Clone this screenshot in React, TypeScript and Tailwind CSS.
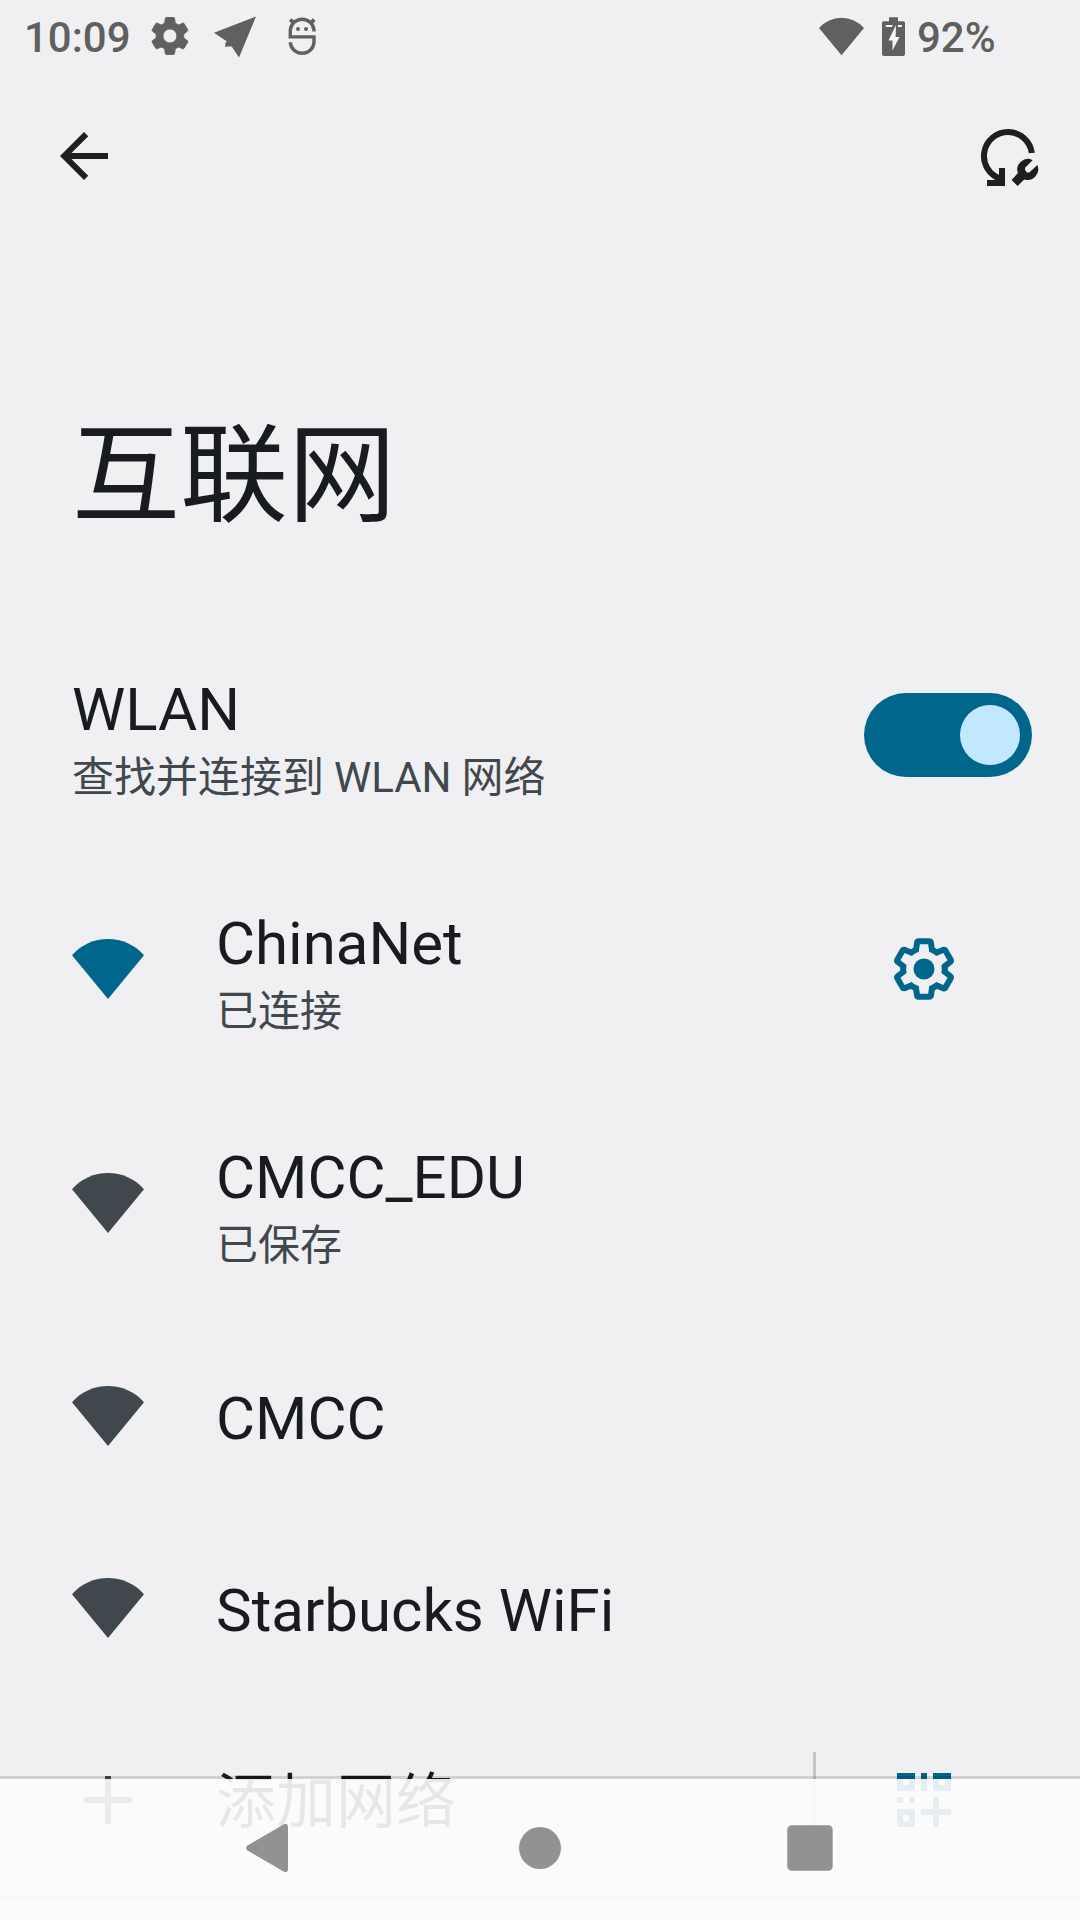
import React from "react";

const WIFI = "M0 7.4A16 16 0 0 1 24 7.4L12 22Z";

function WifiIcon({ className }: { className: string }) {
  return (
    <svg viewBox="0 0 24 24" className={className} fill="currentColor">
      <path d={WIFI} />
    </svg>
  );
}

function StatusBar() {
  return (
    <div className="flex h-[72px] shrink-0 items-center pl-6 text-[42px] font-medium leading-[50px] text-[#606060]">
      <span className="mt-[3px] w-[124px]">10:09</span>
      <svg viewBox="0.1 0.1 24.4 24.4" className="h-[45px] w-[45px]" fill="currentColor" stroke="currentColor" strokeWidth="0.5">
        <path d="M19.43 12.98c.04-.32.07-.64.07-.98s-.03-.66-.07-.98l2.11-1.65c.19-.15.24-.42.12-.64l-2-3.46c-.12-.22-.39-.3-.61-.22l-2.49 1c-.52-.4-1.08-.73-1.69-.98l-.38-2.65C14.46 2.18 14.25 2 14 2h-4c-.25 0-.46.18-.49.42l-.38 2.65c-.61.25-1.17.59-1.69.98l-2.49-1c-.23-.09-.49 0-.61.22l-2 3.46c-.13.22-.07.49.12.64l2.11 1.65c-.04.32-.07.65-.07.98s.03.66.07.98l-2.11 1.65c-.19.15-.24.42-.12.64l2 3.46c.12.22.39.3.61.22l2.49-1c.52.4 1.08.73 1.69.98l.38 2.65c.03.24.24.42.49.42h4c.25 0 .46-.18.49-.42l.38-2.65c.61-.25 1.17-.59 1.69-.98l2.49 1c.23.09.49 0 .61-.22l2-3.46c.12-.22.07-.49-.12-.64l-2.11-1.65zM12 15.8a3.8 3.8 0 1 1 0-7.6a3.8 3.8 0 0 1 0 7.6z" />
      </svg>
      <svg viewBox="0 0 45 45" className="ml-[19px] h-[45px] w-[45px]" fill="currentColor">
        <path d="M44 2.500L27 43.500L19.700 32.500H15.300L13.300 33.200V29.200L14.700 27.200L12 25.500L2 18.800Z" />
      </svg>
      <svg viewBox="0 -0.5 45 45" className="ml-[22px] h-[45px] w-[45px]" fill="none" stroke="currentColor" strokeWidth="3.4">
        <path d="M35 17V15.500A11.900 11.900 0 0 0 11.300 15.500V22.400H35V28A11.900 11.900 0 0 1 11.300 28V27.800" />
        <path d="M11.300 5L14 8M35.200 5L32.500 8" strokeWidth="3.8" />
        <circle cx="19" cy="14.500" r="2" fill="currentColor" stroke="none" />
        <circle cx="27" cy="14.500" r="2" fill="currentColor" stroke="none" />
      </svg>
      <WifiIcon className="ml-[495px] h-[45px] w-[45px]" />
      <svg viewBox="0 0 24 39" className="ml-[17px] h-[39px] w-[24px]" fill="currentColor">
        <path d="M8 0.3H17V4.3H22.5Q24 4.3 24 6V37Q24 39 22 39H3Q1 39 1 37V6Q1 4.3 2.500 4.300H8Z" />
        <path d="M4.800 8H11.800L11 10H4.800ZM17.300 8H20.800V10H16.500ZM15 8L7.500 23.500H11.500V33.500L18.500 20H14.600Z" fill="#f8f8f9" />
      </svg>
      <span className="ml-[12px] mt-[3px]">92%</span>
    </div>
  );
}

function TopBar() {
  return (
    <div className="flex h-[168px] shrink-0 items-center justify-between pl-12 pr-9 text-[#1f1f1f]">
      <svg viewBox="0 0 24 24" className="h-[72px] w-[72px]" fill="currentColor">
        <path d="M20 11H7.83l5.59-5.590L12 4l-8 8 8 8 1.410-1.410L7.830 13H20v-2z" />
      </svg>
      <svg viewBox="0 0 24 24" className="h-[72px] w-[72px]" fill="none" stroke="currentColor" strokeWidth="2">
        <path d="M19.93 11A8 8 0 1 0 9.500 19.600" />
        <path d="M10 16V21H5" />
        <path fill="currentColor" stroke="none" d="M20.200 13.400L17.700 15.900V16.700L18.300 17.500H19.100L21.800 15A3.600 3.600 0 0 1 17.400 19.800L15.200 22L13.200 20L15.300 17.700A3.500 3.500 0 0 1 20.200 13.400Z" />
      </svg>
    </div>
  );
}

type Network = { name: string; state?: string; connected?: boolean };

const networks: Network[] = [
  { name: "ChinaNet", state: "已连接", connected: true },
  { name: "CMCC_EDU", state: "已保存" },
  { name: "CMCC" },
  { name: "Starbucks WiFi" },
];

function RowText({ title, summary }: { title: string; summary?: string }) {
  return (
    <div className="grow">
      <div className="text-[60px] leading-[70px] text-[#191c1e]">{title}</div>
      {summary && <div className="mt-[8px] text-[42px] leading-[50px] text-[#41484d] [word-spacing:-0.5px]">{summary}</div>}
    </div>
  );
}

function NetworkRow({ net }: { net: Network }) {
  return (
    <div className={net.state ? "flex h-[234px] shrink-0 items-center px-[72px]" : "flex h-[192px] shrink-0 items-center px-[72px]"}>
      <WifiIcon className={net.connected ? "mr-[72px] h-[72px] w-[72px] shrink-0 text-[#00668b]" : "mr-[72px] h-[72px] w-[72px] shrink-0 text-[#41484d]"} />
      <div className={net.state ? "grow pt-[8px]" : "grow pt-[6px]"}>
        <RowText title={net.name} summary={net.state} />
      </div>
      {net.connected && (
        <svg viewBox="0 0 24 24" className="mr-[48px] h-[72px] w-[72px] text-[#00668b]" fill="currentColor">
          <path d="M13.85,22.25h-3.7c-0.74,0 -1.36,-0.54 -1.45,-1.27l-0.27,-1.89c-0.27,-0.14 -0.53,-0.29 -0.79,-0.46l-1.8,0.72c-0.7,0.26 -1.47,-0.03 -1.81,-0.65L2.2,15.53c-0.35,-0.66 -0.2,-1.44 0.36,-1.88l1.53,-1.19c-0.01,-0.15 -0.02,-0.3 -0.02,-0.46c0,-0.15 0.01,-0.31 0.02,-0.46l-1.52,-1.19C1.98,9.9 1.83,9.09 2.2,8.47l1.85,-3.19c0.34,-0.62 1.11,-0.9 1.79,-0.63l1.81,0.73c0.26,-0.17 0.52,-0.32 0.78,-0.46l0.27,-1.91c0.09,-0.7 0.71,-1.25 1.44,-1.25h3.7c0.74,0 1.36,0.54 1.45,1.27l0.27,1.89c0.27,0.14 0.53,0.29 0.79,0.46l1.8,-0.72c0.71,-0.26 1.48,0.03 1.82,0.65l1.84,3.18c0.36,0.66 0.2,1.44 -0.36,1.88l-1.52,1.19c0.01,0.15 0.02,0.3 0.02,0.46s-0.01,0.31 -0.02,0.46l1.52,1.19c0.56,0.45 0.72,1.23 0.37,1.86l-1.86,3.22c-0.34,0.62 -1.11,0.9 -1.8,0.63l-1.8,-0.72c-0.26,0.17 -0.52,0.32 -0.78,0.46l-0.27,1.91C15.21,21.71 14.59,22.25 13.85,22.25zM10.62,20.25h2.76l0.37,-2.55l0.53,-0.22c0.44,-0.18 0.88,-0.44 1.34,-0.78l0.45,-0.34l2.38,0.96l1.38,-2.4l-2.03,-1.58l0.07,-0.56c0.03,-0.26 0.06,-0.51 0.06,-0.78c0,-0.27 -0.03,-0.53 -0.06,-0.78l-0.07,-0.56l2.03,-1.58l-1.39,-2.4l-2.39,0.96l-0.45,-0.35c-0.42,-0.32 -0.87,-0.58 -1.33,-0.77L13.75,6.3l-0.37,-2.55h-2.76L10.25,6.3L9.72,6.51C9.28,6.7 8.84,6.95 8.38,7.3L7.93,7.63L5.55,6.68L4.16,9.07l2.03,1.58l-0.07,0.56C6.09,11.47 6.06,11.74 6.06,12c0,0.26 0.02,0.53 0.06,0.78l0.07,0.56l-2.03,1.58l1.38,2.4l2.39,-0.96l0.45,0.35c0.43,0.33 0.86,0.58 1.33,0.77l0.53,0.22L10.62,20.25z" />
          <circle cx="12" cy="12" r="3.5" />
        </svg>
      )}
    </div>
  );
}

function AddRow() {
  return (
    <div className="flex h-[192px] shrink-0 items-center pl-[72px]">
      <svg viewBox="0 0 24 24" className="h-[72px] w-[72px] text-[#41484d]" fill="currentColor">
        <path d="M11 4h2v7h7v2h-7v7h-2v-7H4v-2h7z" />
      </svg>
      <div className="ml-[72px] w-[597px] pt-[6px] text-[60px] leading-[70px] text-[#191c1e]">添加网络</div>
      <div className="h-[96px] w-[3px] bg-[#c5c5c7]" />
      <svg viewBox="0 0 24 24" className="ml-[72px] h-[72px] w-[72px] text-[#00668b]" fill="currentColor" fillRule="evenodd" shapeRendering="crispEdges">
        <path d="M3 3h6v6H3zM5 5v2h2V5zM11 3h2v6h-2zM15 3h6v6h-6zM17 5v2h2V5zM3 11h2v2H3zM7 11h2v2H7zM3 15h6v6H3zM5 17v2h2v-2zM15 11h2v4h4v2h-4v4h-2v-4h-4v-2h4z" />
      </svg>
    </div>
  );
}

function NavBar() {
  return (
    <div className="absolute inset-x-0 bottom-0 flex h-[144px] flex-col text-[#929292]">
      <div className="h-[3px] bg-black/12" />
      <div className="flex grow items-center justify-center gap-[198px] bg-[#fcfcfc]/91 pb-[3px]">
        <svg viewBox="0 0 72 72" className="h-[72px] w-[72px]" fill="currentColor">
          <path d="M50 12.300Q54 11 54 15V57Q54 61 50 59.700L13.500 38.500Q10.500 36 13.500 33.500Z" />
        </svg>
        <svg viewBox="0 0 72 72" className="h-[72px] w-[72px]" fill="currentColor">
          <circle cx="36" cy="36" r="21" />
        </svg>
        <svg viewBox="0 0 72 72" className="h-[72px] w-[72px]" fill="currentColor">
          <rect x="13.300" y="13.300" width="45.400" height="45.400" rx="4.500" />
        </svg>
      </div>
    </div>
  );
}

export default function App() {
  return (
    <div className="relative flex h-[1920px] w-[1080px] flex-col overflow-hidden bg-[#f0f0f2] font-['Roboto','Noto_Sans_CJK_SC',sans-serif]">
      <StatusBar />
      <TopBar />
      <div className="flex h-[378px] shrink-0 items-start pl-[72px] pt-[173px]">
        <h1 className="text-[108px] leading-[127px] text-[#191c1e]">互联网</h1>
      </div>
      <div className="flex h-[234px] shrink-0 items-center pl-[72px] pr-12">
        <div className="grow pt-[8px]">
          <RowText title="WLAN" summary="查找并连接到 WLAN 网络" />
        </div>
        <div className="flex h-[84px] w-[168px] items-center justify-end rounded-full bg-[#00668b] pr-3">
          <div className="h-[60px] w-[60px] rounded-full bg-[#c2e8ff]" />
        </div>
      </div>
      {networks.map((n) => (
        <NetworkRow key={n.name} net={n} />
      ))}
      <AddRow />
      <div className="h-[3px] shrink-0 bg-[#c5c5c7]" />
      <NavBar />
    </div>
  );
}
